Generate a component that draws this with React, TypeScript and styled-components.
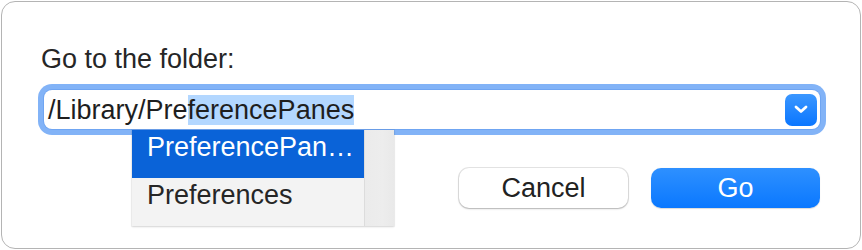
import React from "react";
import styled, { createGlobalStyle } from "styled-components";

const GlobalStyle = createGlobalStyle`
  html, body {
    margin: 0;
    padding: 0;
    background: #ffffff;
  }
  body {
    font-family: "Liberation Sans", Arial, sans-serif;
    -webkit-font-smoothing: antialiased;
  }
`;

const Page = styled.div`
  width: 862px;
  height: 250px;
  padding: 1px;
  box-sizing: border-box;
`;

const Dialog = styled.div`
  width: 860px;
  height: 248px;
  box-sizing: border-box;
  border: 1px solid #b4b4b4;
  border-radius: 14px;
  background: #ffffff;
  padding: 41px 40px 0 39px;
  display: flex;
  flex-direction: column;
`;

const Label = styled.div`
  font-size: 27px;
  line-height: 32px;
  color: #262626;
`;

const Field = styled.div`
  position: relative;
  margin: 15px 0 0 3px;
  height: 39px;
  border-radius: 8px;
  background: #ffffff;
  box-shadow: 0 0 0 1px #6fa5f2, 0 0 0 6px #82b3f7;
  display: flex;
  align-items: center;
  padding: 0 3px 0 4px;
`;

const FieldText = styled.div`
  flex: 1;
  font-size: 27px;
  line-height: 32px;
  color: #1e1e1e;
  white-space: nowrap;
`;

const Selected = styled.span`
  background: #b3d7ff;
`;

const ChevronButton = styled.div`
  width: 32px;
  height: 32px;
  border-radius: 7px;
  background: linear-gradient(180deg, #3b97ff 0%, #0a76ff 100%);
  display: flex;
  align-items: center;
  justify-content: center;
`;

const Dropdown = styled.div`
  position: absolute;
  top: 40px;
  left: 88px;
  width: 262px;
  height: 96px;
  display: flex;
  background: #f3f3f3;
  box-shadow: 0 1px 2px rgba(0, 0, 0, 0.14), 0 0 0 1px rgba(0, 0, 0, 0.04);
`;

const List = styled.div`
  flex: 1;
  display: flex;
  flex-direction: column;
`;

const Row = styled.div<{ $active?: boolean }>`
  height: 48px;
  box-sizing: border-box;
  padding: 2px 0 0 15px;
  font-size: 27px;
  line-height: 30px;
  white-space: nowrap;
  overflow: hidden;
  color: ${(p) => (p.$active ? "#ffffff" : "#262626")};
  background: ${(p) => (p.$active ? "#0a63d8" : "transparent")};
`;

const Scroller = styled.div`
  width: 29px;
  border-left: 1px solid #dcdcdc;
  background: linear-gradient(90deg, #ebebeb 0%, #ededed 60%, #e9e9e9 100%);
`;

const Buttons = styled.div`
  display: flex;
  justify-content: flex-end;
  gap: 23px;
  margin-top: 39px;
`;

const Button = styled.button<{ $primary?: boolean }>`
  width: 169px;
  height: 40px;
  border: none;
  border-radius: 10px;
  font-family: "Liberation Sans", Arial, sans-serif;
  font-size: 27px;
  padding: 0;
  color: ${(p) => (p.$primary ? "#ffffff" : "#222222")};
  background: ${(p) =>
    p.$primary
      ? "linear-gradient(180deg, #2e90ff 0%, #0a78ff 100%)"
      : "#ffffff"};
  box-shadow: ${(p) =>
    p.$primary
      ? "0 0.5px 1px rgba(0, 0, 0, 0.15)"
      : "0 0 0 1px rgba(0, 0, 0, 0.1), 0 1px 2px rgba(0, 0, 0, 0.22)"};
`;

const Chevron = () => (
  <svg width="14" height="9" viewBox="0 0 14 9">
    <path
      d="M2 2 L7 6.5 L12 2"
      fill="none"
      stroke="#ffffff"
      strokeWidth="2.8"
      strokeLinecap="round"
      strokeLinejoin="round"
    />
  </svg>
);

export default function App() {
  return (
    <>
      <GlobalStyle />
      <Page>
        <Dialog>
          <Label>Go to the folder:</Label>
          <Field>
            <FieldText>
              /Library/Pre<Selected>ferencePanes</Selected>
            </FieldText>
            <ChevronButton>
              <Chevron />
            </ChevronButton>
            <Dropdown>
              <List>
                <Row $active>PreferencePan…</Row>
                <Row>Preferences</Row>
              </List>
              <Scroller />
            </Dropdown>
          </Field>
          <Buttons>
            <Button>Cancel</Button>
            <Button $primary>Go</Button>
          </Buttons>
        </Dialog>
      </Page>
    </>
  );
}
